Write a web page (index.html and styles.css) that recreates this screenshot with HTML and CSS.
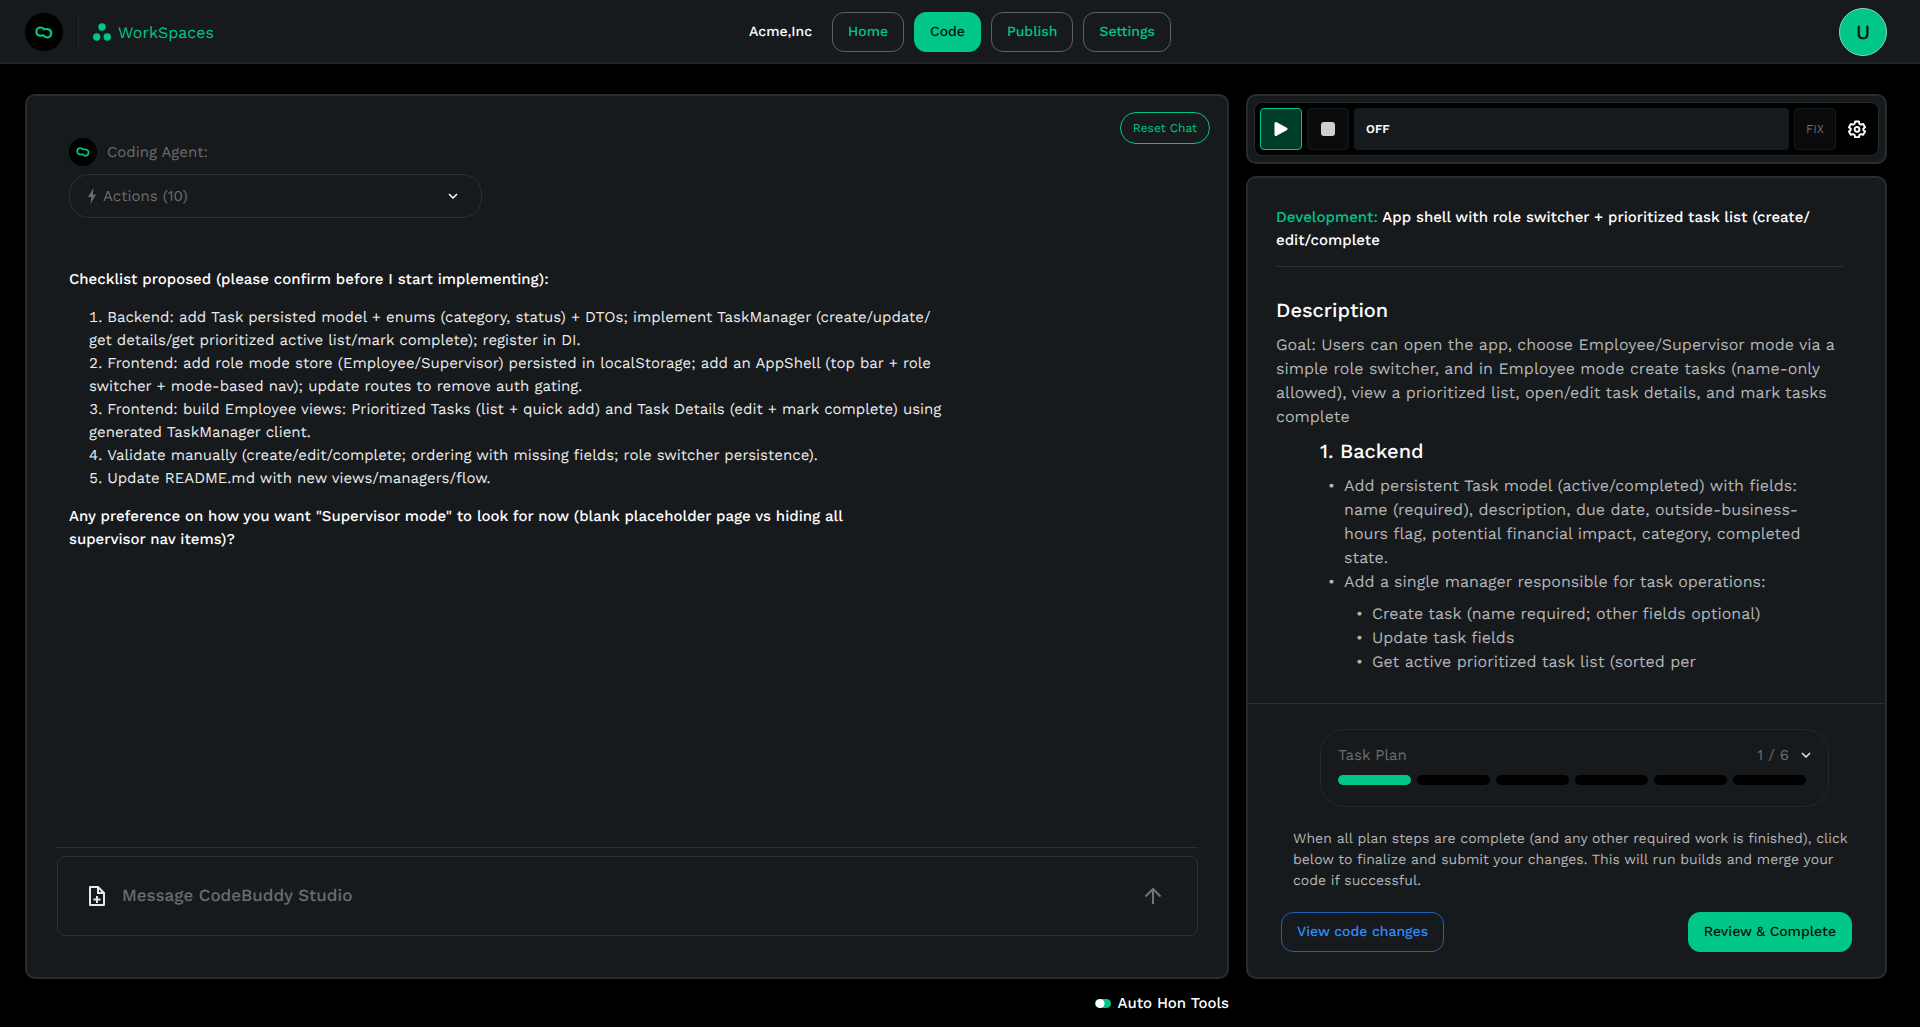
FILE: index.html
```html
<!DOCTYPE html>
<html lang="en">
<head>
    <meta charset="UTF-8">
    <meta name="viewport" content="width=device-width, initial-scale=1.0">
    <title>CodeBuddy Studio</title>
    <link rel="stylesheet" href="styles.css">
</head>
<body>
    <svg class="sprite" aria-hidden="true">
        <symbol id="logo" viewBox="0 0 18 13">
            <path d="M8.200 9.200C7.400 9.800 6.400 9.800 5.400 9.700A4.100 4.100 0 0 1 5.600 1.500C7.200 1.500 8.300 2.200 9 3.300C10 2.900 11.500 3 12.800 3.200A4.200 4.200 0 0 1 12.400 11.500C10.600 11.500 9.600 10.600 8.200 9.200Z" fill="none" stroke="currentColor" stroke-width="2.200" stroke-linejoin="round"/>
        </symbol>
        <symbol id="chevron" viewBox="0 0 10 6">
            <path d="M1 1l4 4 4-4" fill="none" stroke="currentColor" stroke-width="1.500"/>
        </symbol>
    </svg>

    <header class="topbar">
        <div class="brand">
            <a href="#" class="logo" aria-label="CodeBuddy Studio"><svg width="18" height="13"><use href="#logo"/></svg></a>
            <a href="#" class="workspaces">
                <svg width="18" height="18" viewBox="0 0 18 18" fill="currentColor"><circle cx="9" cy="4" r="3.700"/><circle cx="3.700" cy="14" r="3.700"/><circle cx="14.300" cy="14" r="3.700"/></svg>
                WorkSpaces
            </a>
        </div>
        <nav class="nav">
            <span class="company">Acme,Inc</span>
            <button type="button" class="btn">Home</button>
            <button type="button" class="btn filled">Code</button>
            <button type="button" class="btn">Publish</button>
            <button type="button" class="btn">Settings</button>
        </nav>
        <button type="button" class="avatar">U</button>
    </header>

    <main class="workspace">
        <section class="panel chat">
            <button type="button" class="reset">Reset Chat</button>
            <div class="messages">
                <div class="agent">
                    <span class="agent-icon"><svg width="14" height="10"><use href="#logo"/></svg></span>
                    Coding Agent:
                </div>
                <button type="button" class="actions">
                    <svg width="8" height="16" viewBox="0 0 8 16" fill="currentColor"><path d="M5.500 0L0 9h3.200L2.500 16L8 6.500H4.800z"/></svg>
                    <span>Actions (10)</span>
                    <svg class="chevron" width="10" height="6"><use href="#chevron"/></svg>
                </button>
                <div class="message">
                    <p>Checklist proposed (please confirm before I start implementing):</p>
                    <ol>
                        <li>Backend: add Task persisted model + enums (category, status) + DTOs; implement TaskManager (create/update/<br>get details/get prioritized active list/mark complete); register in DI.</li>
                        <li>Frontend: add role mode store (Employee/Supervisor) persisted in localStorage; add an AppShell (top bar + role<br>switcher + mode-based nav); update routes to remove auth gating.</li>
                        <li>Frontend: build Employee views: Prioritized Tasks (list + quick add) and Task Details (edit + mark complete) using<br>generated TaskManager client.</li>
                        <li>Validate manually (create/edit/complete; ordering with missing fields; role switcher persistence).</li>
                        <li>Update README.md with new views/managers/flow.</li>
                    </ol>
                    <p>Any preference on how you want "Supervisor mode" to look for now (blank placeholder page vs hiding all<br>supervisor nav items)?</p>
                </div>
            </div>
            <form class="composer">
                <button type="button" class="icon-btn" aria-label="Attach file">
                    <svg width="18" height="22" viewBox="0 0 18 22" fill="none" stroke="currentColor" stroke-width="2"><path d="M2 2h8l6 6v12H2z" stroke-linejoin="round"/><path d="M10 2v6h6M9 11v7M5.500 14.500h7"/></svg>
                </button>
                <input type="text" placeholder="Message CodeBuddy Studio" aria-label="Message">
                <button type="submit" class="icon-btn send" aria-label="Send">
                    <svg width="18" height="18" viewBox="0 0 18 18" fill="none" stroke="currentColor" stroke-width="2"><path d="M9 17V2M1.500 9.500L9 2l7.500 7.500"/></svg>
                </button>
            </form>
        </section>

        <aside class="side">
            <div class="panel runner">
                <div class="runner-bar">
                    <button type="button" class="tool play" aria-label="Run">
                        <svg width="14" height="16" viewBox="0 0 14 16" fill="currentColor"><path d="M2 2.500l10 5.500L2 13.500z" stroke="currentColor" stroke-width="3" stroke-linejoin="round"/></svg>
                    </button>
                    <button type="button" class="tool" aria-label="Stop"><span class="stop"></span></button>
                    <output class="status">OFF</output>
                    <button type="button" class="tool fix">FIX</button>
                    <button type="button" class="tool gear" aria-label="Settings">
                        <svg width="18" height="18" viewBox="0 0 24 24" fill="none" stroke="currentColor" stroke-width="2.600" stroke-linejoin="round"><path d="M9.500 2h5l.7 3 2 1.200 3-.9 2.500 4.300-2.300 2.100v1.600l2.300 2.100-2.500 4.300-3-.9-2 1.200-.7 3h-5l-.7-3-2-1.200-3 .9-2.500-4.300 2.300-2.100v-1.600L1.300 9.600l2.500-4.300 3 .9 2-1.200z"/><circle cx="12" cy="12.500" r="3.200"/></svg>
                    </button>
                </div>
            </div>

            <div class="panel task">
                <div class="task-body">
                    <h1><span>Development:</span> App shell with role switcher + prioritized task list (create/<br>edit/complete</h1>
                    <h2>Description</h2>
                    <p>Goal: Users can open the app, choose Employee/Supervisor mode via a<br>simple role switcher, and in Employee mode create tasks (name-only<br>allowed), view a prioritized list, open/edit task details, and mark tasks<br>complete</p>
                    <div class="step">
                        <h2>1. Backend</h2>
                        <ul>
                            <li>Add persistent Task model (active/completed) with fields:<br>name (required), description, due date, outside-business-<br>hours flag, potential financial impact, category, completed<br>state.</li>
                            <li>Add a single manager responsible for task operations:
                                <ul>
                                    <li>Create task (name required; other fields optional)</li>
                                    <li>Update task fields</li>
                                    <li>Get active prioritized task list (sorted per</li>
                                </ul>
                            </li>
                        </ul>
                    </div>
                </div>
                <div class="task-footer">
                    <div class="plan">
                        <div class="plan-head">
                            <span>Task Plan</span>
                            <span class="count">1 / 6</span>
                            <button type="button" class="icon-btn" aria-label="Show plan"><svg width="10" height="6"><use href="#chevron"/></svg></button>
                        </div>
                        <div class="steps">
                            <i class="done"></i><i></i><i></i><i></i><i></i><i></i>
                        </div>
                    </div>
                    <p>When all plan steps are complete (and any other required work is finished), click<br>below to finalize and submit your changes. This will run builds and merge your<br>code if successful.</p>
                    <div class="task-buttons">
                        <button type="button" class="btn link">View code changes</button>
                        <button type="button" class="btn filled">Review &amp; Complete</button>
                    </div>
                </div>
            </div>
        </aside>

        <label class="auto">
            <input type="checkbox" role="switch">
            Auto Hon Tools
        </label>
    </main>
</body>
</html>
```
FILE: styles.css
```css
* {
    box-sizing: border-box;
}
body {
    margin: 0;
    min-height: 100vh;
    display: flex;
    flex-direction: column;
    background: #000;
    color: #fff;
    font-family: "Work Sans", Inter, sans-serif;
    font-size: 15px;
    text-rendering: geometricPrecision;
}
h1, h2, p, ol, ul {
    margin: 0;
    padding: 0;
    font-weight: 500;
}
a {
    color: #00c687;
    text-decoration: none;
}
button, input {
    font-family: inherit;
    text-rendering: inherit;
}
button {
    cursor: pointer;
}
svg {
    display: block;
    flex-shrink: 0;
}
.sprite {
    position: absolute;
    width: 0;
    height: 0;
}

/* top bar */
.topbar {
    display: grid;
    grid-template-columns: 1fr auto 1fr;
    align-items: center;
    height: 64px;
    padding: 0 25px;
    background: #171a1d;
    box-shadow: inset 0 -2px #222524;
}
.brand {
    display: flex;
    align-items: center;
}
.logo {
    display: flex;
    align-items: center;
    justify-content: center;
    width: 38px;
    height: 38px;
    border-radius: 50%;
    background: #000;
}
.workspaces {
    display: flex;
    align-items: center;
    gap: 7px;
    height: 32px;
    margin-left: 15px;
    padding-left: 14px;
    border-left: 1px solid #25292a;
    font-size: 16px;
}
.nav {
    display: flex;
    align-items: center;
    gap: 10px;
}
.company {
    margin-right: 10px;
    font-size: 14px;
    font-weight: 500;
}
.btn {
    height: 40px;
    padding: 0 15px;
    border: 1px solid #5e6163;
    border-radius: 12px;
    background: none;
    color: #00c687;
    font-size: 14px;
    font-weight: 500;
    white-space: nowrap;
}
.btn.filled {
    background: #00c687;
    border-color: #00c687;
    color: #04150f;
}
.btn.link {
    border-color: #1f63b8;
    color: #2d8cff;
}
.avatar {
    justify-self: end;
    width: 48px;
    height: 48px;
    margin-right: 8px;
    border: 1px solid #7fdcb9;
    border-radius: 50%;
    background: #00c687;
    color: #04150f;
    font-size: 20px;
    font-weight: 500;
}

/* page grid */
.workspace {
    flex: 1;
    display: grid;
    grid-template-columns: minmax(0, 1204fr) minmax(0, 641fr);
    grid-template-rows: 1fr 48px;
    column-gap: 17px;
    padding: 30px 33px 0 25px;
}
.panel {
    background: #171a1d;
    border: 2px solid #2a2d2d;
    border-radius: 10px;
}

/* chat */
.chat {
    position: relative;
    display: flex;
    flex-direction: column;
    padding: 42px 29px 41px 30px;
}
.reset {
    position: absolute;
    top: 16px;
    right: 17px;
    height: 32px;
    padding: 0 12px;
    border: 1px solid #00c687;
    border-radius: 16px;
    background: none;
    color: #00c687;
    font-size: 12px;
}
.messages {
    flex: 1;
    padding: 0 12px;
    border-bottom: 1px solid #2c3031;
}
.agent {
    display: flex;
    align-items: center;
    gap: 10px;
    color: #6a6d6f;
}
.agent-icon {
    display: flex;
    align-items: center;
    justify-content: center;
    width: 28px;
    height: 28px;
    border-radius: 50%;
    background: #000;
    color: #00c687;
}
.actions {
    display: flex;
    align-items: center;
    gap: 7px;
    width: 413px;
    height: 44px;
    margin-top: 8px;
    padding: 0 23px 0 18px;
    border: 1px solid #2c3031;
    border-radius: 20px;
    background: none;
    color: #6a6d6f;
    font-size: 15px;
}
.actions .chevron {
    margin-left: auto;
    color: #fff;
}
.message {
    margin-top: 50px;
    line-height: 23px;
}
.message ol {
    margin: 15px 0 15px 20px;
    list-style-position: inside;
    color: #eceded;
}
.message li {
    font-weight: 400;
}
.composer {
    display: flex;
    align-items: center;
    height: 80px;
    margin-top: 8px;
    padding: 0 35px 0 30px;
    border: 1px solid #2c3031;
    border-radius: 8px;
}
.composer input {
    flex: 1;
    margin-left: 16px;
    padding: 0;
    border: 0;
    outline: 0;
    background: none;
    color: #fff;
    font-size: 17px;
    font-weight: 500;
}
.composer input::placeholder {
    color: #6a6d6f;
}
.icon-btn {
    padding: 0;
    border: 0;
    background: none;
    color: #e6e8e8;
}
.icon-btn.send {
    color: #707375;
}

/* right column */
.side {
    display: flex;
    flex-direction: column;
    gap: 12px;
}
.runner {
    padding: 6px;
}
.runner-bar {
    display: flex;
    gap: 5px;
    padding: 5px;
    border: 1px solid #25292a;
    border-radius: 8px;
    background: #000;
}
.tool {
    display: flex;
    align-items: center;
    justify-content: center;
    width: 42px;
    height: 42px;
    padding: 0;
    border: 1px solid #16191a;
    border-radius: 4px;
    background: #0a0b0d;
    color: #fff;
    font-size: 12px;
}
.tool.play {
    border-color: #00c687;
    background: #003d29;
}
.tool.fix {
    color: #6a6d6f;
}
.tool.gear {
    width: 32px;
    border: 0;
    background: none;
}
.stop {
    width: 14px;
    height: 14px;
    border-radius: 3px;
    background: #cfcfcf;
}
.status {
    flex: 1;
    padding-left: 12px;
    border-radius: 4px;
    background: #171a1d;
    font-size: 12px;
    font-weight: 600;
    line-height: 42px;
}
.task {
    flex: 1;
    display: flex;
    flex-direction: column;
}
.task-body {
    flex: 1;
    padding: 28px 42px 28px 28px;
    color: #b4b6b7;
    font-size: 16px;
    line-height: 24px;
}
.task-body h1 {
    margin-bottom: 28px;
    padding-bottom: 14px;
    border-bottom: 1px solid #2c3031;
    color: #fff;
    font-size: 15px;
    line-height: 23px;
}
.task-body h1 span {
    color: #00c687;
}
.task-body h2 {
    margin-bottom: 8px;
    color: #fff;
    font-size: 20px;
    line-height: 30px;
}
.task-body p, .task-body li {
    font-weight: 400;
}
.step {
    padding: 7px 0 0 44px;
}
.step ul {
    list-style: none;
    padding-left: 24px;
}
.step ul ul {
    margin-top: 8px;
    padding-left: 28px;
}
.step li::before {
    content: "•";
    float: left;
    margin-left: -16px;
}
.task-footer {
    padding: 25px 33px;
    border-top: 1px solid #2c3031;
}
.plan {
    height: 78px;
    margin: 0 23px 0 39px;
    padding: 15px 17px;
    border: 1px solid #25292a;
    border-radius: 24px;
    color: #6a6d6f;
}
.plan-head {
    display: flex;
    align-items: center;
    line-height: 20px;
}
.count {
    margin: 0 12px 0 auto;
}
.steps {
    display: flex;
    gap: 6px;
    margin: 10px 5px 0 0;
}
.steps i {
    flex: 1;
    height: 10px;
    border-radius: 5px;
    background: #000;
}
.steps .done {
    background: #00c687;
}
.task-footer p {
    margin: 22px 0 0 12px;
    color: #b4b6b7;
    font-size: 14px;
    font-weight: 400;
    line-height: 21px;
}
.task-buttons {
    display: flex;
    justify-content: space-between;
    margin-top: 20px;
}

/* below the panels */
.auto {
    justify-self: end;
    align-self: center;
    display: flex;
    align-items: center;
    gap: 7px;
    font-weight: 500;
}
.auto input {
    appearance: none;
    width: 16px;
    height: 9px;
    margin: 0;
    border-radius: 5px;
    background: radial-gradient(circle at 5px 50%, #fff 4px, #00c687 5px);
}
```
